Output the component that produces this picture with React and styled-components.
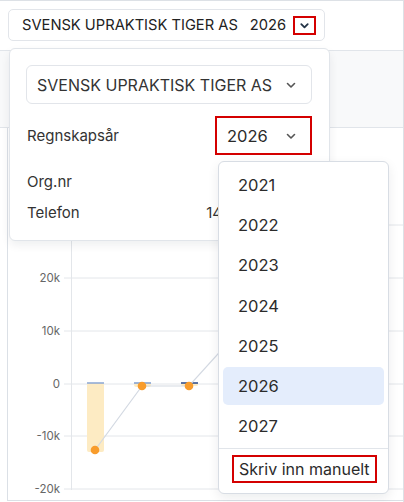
import React from "react";
import styled, { createGlobalStyle } from "styled-components";

const GlobalStyle = createGlobalStyle`
  body {
    margin: 0;
    font-family: Inter, "Noto Sans", sans-serif;
    color: #2b2b2b;
    background: #fff;
  }
  * { box-sizing: border-box; }
`;

const years = [2021, 2022, 2023, 2024, 2025, 2026, 2027];
const selectedYear = 2026;

const bars = [
  { x: 87, top: 383, bottom: 452, line: "#8aa6d3", dot: 450 },
  { x: 134, top: 383, bottom: 387, line: "#7d9ccf", dot: 386 },
  { x: 181, top: 383, bottom: 386, line: "#27478a", dot: 386 },
];

// 30k line sits under the popover, so it has no visible label
const ticks = [
  { label: "", y: 225 },
  { label: "20k", y: 278 },
  { label: "10k", y: 331 },
  { label: "0", y: 384 },
  { label: "-10k", y: 436 },
  { label: "-20k", y: 489 },
];

function Chevron({ size = 12, color = "#555", weight = 1.6 }) {
  return (
    <svg width={size} height={size} viewBox="0 0 12 12" fill="none">
      <polyline
        points="2.5,4.5 6,8 9.5,4.5"
        stroke={color}
        strokeWidth={weight}
        strokeLinecap="round"
        strokeLinejoin="round"
      />
    </svg>
  );
}

export default function App() {
  return (
    <>
      <GlobalStyle />
      <Page>
        <Header>
          <Trigger>
            <TriggerName>SVENSK UPRAKTISK TIGER AS</TriggerName>
            <TriggerYear>2026</TriggerYear>
            <Marked $pad="2px 4px">
              <Chevron size={11} color="#233447" weight={2} />
            </Marked>
          </Trigger>
        </Header>
        <Band />
        <ChartCard>
          <svg width="395" height="372" viewBox="8 128 395 372">
            {ticks.map((t) => (
              <g key={t.y}>
                <line x1="64" x2="403" y1={t.y} y2={t.y} stroke="#e3e6ea" />
                {t.label && (
                  <text
                    x="60"
                    y={t.y + 4}
                    textAnchor="end"
                    fontSize="11.5"
                    fill="#666"
                    fontFamily="Inter, sans-serif"
                  >
                    {t.label}
                  </text>
                )}
              </g>
            ))}
            <line x1="71.5" x2="71.5" y1="210" y2="490" stroke="#e3e6ea" />
            {bars.map((b) => (
              <g key={b.x}>
                <rect x={b.x} y={b.top} width="17" height={b.bottom - b.top} rx="2" fill="#fdebc3" />
                <line x1={b.x} x2={b.x + 17} y1={b.top} y2={b.top} stroke={b.line} strokeWidth="1.5" />
              </g>
            ))}
            <polyline
              points="95,450 142,386 189,386 236,334 283,300"
              fill="none"
              stroke="#d3d9e2"
              strokeWidth="1.2"
            />
            {bars.map((b) => (
              <circle key={b.x} cx={b.x + 8} cy={b.dot} r="4.3" fill="#f89c2c" />
            ))}
          </svg>
        </ChartCard>

        <Popover>
          <CompanySelect>
            <span>SVENSK UPRAKTISK TIGER AS</span>
            <Chevron />
          </CompanySelect>
          <YearRow>
            <Label>Regnskapsår</Label>
            <YearSelect>
              <span>2026</span>
              <Chevron />
            </YearSelect>
          </YearRow>
          <InfoList>
            <InfoRow>
              <Label>Org.nr</Label>
              <Value>923 456 789</Value>
            </InfoRow>
            <InfoRow>
              <Label>Telefon</Label>
              <Value>14 25 63 78 90</Value>
            </InfoRow>
          </InfoList>
        </Popover>

        <YearMenu>
          <YearList>
            {years.map((y) => (
              <YearItem key={y} $active={y === selectedYear}>
                {y}
              </YearItem>
            ))}
          </YearList>
          <MenuFooter>
            <Marked $pad="2px 5px">Skriv inn manuelt</Marked>
          </MenuFooter>
        </YearMenu>
      </Page>
    </>
  );
}

const Page = styled.div`
  position: relative;
  width: 404px;
  height: 502px;
  overflow: hidden;
  border-top: 1px solid #dde1e6;
  border-right: 1px solid #dde1e6;
`;

const Header = styled.div`
  height: 50px;
  padding: 8px 0 0 8px;
  border-bottom: 1px solid #e1e5ea;
`;

const Band = styled.div`
  height: 77px;
  background: #f8f9fa;
  border-bottom: 1px solid #e1e5ea;
`;

const ChartCard = styled.div`
  margin-left: 7px;
  height: 373px;
  border-left: 1px solid #dbe0e6;
  border-bottom: 1px solid #dbe0e6;

  svg {
    display: block;
  }
`;

const Trigger = styled.div`
  display: flex;
  align-items: center;
  width: 317px;
  height: 32px;
  padding: 0 7px 0 13px;
  border: 1px solid #e2e5ea;
  border-radius: 5px;
  background: #fff;
  font-size: 14.7px;
`;

const TriggerName = styled.span`
  color: #222;
`;

const TriggerYear = styled.span`
  margin-left: 12px;
  margin-right: 7px;
  color: #222;
`;

const Marked = styled.span`
  display: inline-flex;
  align-items: center;
  justify-content: center;
  padding: ${(p) => p.$pad};
  border: 2px solid #d40000;
`;

const Popover = styled.div`
  position: absolute;
  left: 9px;
  top: 47px;
  width: 321px;
  height: 193px;
  padding: 16px 17px 0 16px;
  background: #fff;
  border: 1px solid #e1e5ea;
  border-radius: 6px;
  box-shadow: 0 4px 10px rgba(15, 23, 42, 0.07);
  font-size: 15px;
`;

const CompanySelect = styled.div`
  display: flex;
  align-items: center;
  justify-content: space-between;
  height: 39px;
  padding: 0 14px 0 10px;
  border: 1px solid #e2e5ea;
  border-radius: 6px;
  color: #333;
  font-size: 16px;
`;

const YearRow = styled.div`
  display: flex;
  align-items: center;
  justify-content: space-between;
  margin-top: 12px;
  padding-left: 1px;
`;

const Label = styled.span`
  color: #333;
`;

const YearSelect = styled.div`
  display: flex;
  align-items: center;
  justify-content: space-between;
  width: 97px;
  height: 39px;
  padding: 0 13px 0 10px;
  border: 2px solid #d40000;
  font-size: 16.5px;
  color: #2b2b2b;
`;

const InfoList = styled.div`
  display: flex;
  flex-direction: column;
  margin-top: 11px;
`;

const InfoRow = styled.div`
  display: flex;
  align-items: center;
  justify-content: space-between;
  height: 31px;
  padding-left: 1px;
`;

const Value = styled.span`
  color: #333;
`;

const YearMenu = styled.div`
  position: absolute;
  left: 218px;
  top: 160px;
  width: 171px;
  height: 333px;
  background: #fff;
  border: 1px solid #d8dde4;
  border-radius: 6px;
  box-shadow: 0 4px 12px rgba(15, 23, 42, 0.08);
`;

const YearList = styled.div`
  display: flex;
  flex-direction: column;
  gap: 2.2px;
  padding: 4px 4px 3px;
  border-bottom: 1px solid #e1e5ea;
`;

const YearItem = styled.div`
  display: flex;
  align-items: center;
  height: 38px;
  padding-left: 15px;
  border-radius: 5px;
  font-size: 16.5px;
  color: #2b2b2b;
  background: ${(p) => (p.$active ? "#e4edfc" : "transparent")};
`;

const MenuFooter = styled.div`
  padding: 6px 0 0 13px;
  font-size: 16px;
  color: #2b2b2b;
`;
